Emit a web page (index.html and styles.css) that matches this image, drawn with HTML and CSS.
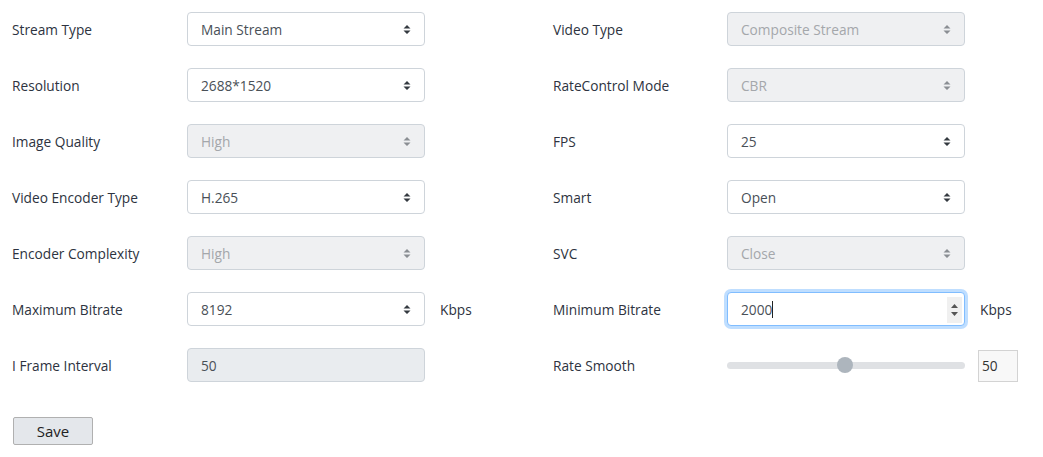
FILE: index.html
```html
<!DOCTYPE html>
<html>
<head>
<meta charset="utf-8">
<link rel="stylesheet" href="styles.css">
</head>
<body>
<div class="page">
  <div class="form">
    <div class="label">Stream Type</div>
    <div class="select"><span>Main Stream</span><svg class="arrow" width="8" height="11" viewBox="0 0 8 11"><path d="M4 1 L7.5 4.5 H0.5 Z M4 10 L7.5 6.5 H0.5 Z"/></svg></div>
    <div class="unit"></div>
    <div class="label">Video Type</div>
    <div class="select disabled"><span>Composite Stream</span><svg class="arrow" width="8" height="11" viewBox="0 0 8 11"><path d="M4 1 L7.5 4.5 H0.5 Z M4 10 L7.5 6.5 H0.5 Z"/></svg></div>
    <div class="unit"></div>

    <div class="label">Resolution</div>
    <div class="select"><span>2688*1520</span><svg class="arrow" width="8" height="11" viewBox="0 0 8 11"><path d="M4 1 L7.5 4.5 H0.5 Z M4 10 L7.5 6.5 H0.5 Z"/></svg></div>
    <div class="unit"></div>
    <div class="label">RateControl Mode</div>
    <div class="select disabled"><span>CBR</span><svg class="arrow" width="8" height="11" viewBox="0 0 8 11"><path d="M4 1 L7.5 4.5 H0.5 Z M4 10 L7.5 6.5 H0.5 Z"/></svg></div>
    <div class="unit"></div>

    <div class="label">Image Quality</div>
    <div class="select disabled"><span>High</span><svg class="arrow" width="8" height="11" viewBox="0 0 8 11"><path d="M4 1 L7.5 4.5 H0.5 Z M4 10 L7.5 6.5 H0.5 Z"/></svg></div>
    <div class="unit"></div>
    <div class="label">FPS</div>
    <div class="select"><span>25</span><svg class="arrow" width="8" height="11" viewBox="0 0 8 11"><path d="M4 1 L7.5 4.5 H0.5 Z M4 10 L7.5 6.5 H0.5 Z"/></svg></div>
    <div class="unit"></div>

    <div class="label">Video Encoder Type</div>
    <div class="select"><span>H.265</span><svg class="arrow" width="8" height="11" viewBox="0 0 8 11"><path d="M4 1 L7.5 4.5 H0.5 Z M4 10 L7.5 6.5 H0.5 Z"/></svg></div>
    <div class="unit"></div>
    <div class="label">Smart</div>
    <div class="select"><span>Open</span><svg class="arrow" width="8" height="11" viewBox="0 0 8 11"><path d="M4 1 L7.5 4.5 H0.5 Z M4 10 L7.5 6.5 H0.5 Z"/></svg></div>
    <div class="unit"></div>

    <div class="label">Encoder Complexity</div>
    <div class="select disabled"><span>High</span><svg class="arrow" width="8" height="11" viewBox="0 0 8 11"><path d="M4 1 L7.5 4.5 H0.5 Z M4 10 L7.5 6.5 H0.5 Z"/></svg></div>
    <div class="unit"></div>
    <div class="label">SVC</div>
    <div class="select disabled"><span>Close</span><svg class="arrow" width="8" height="11" viewBox="0 0 8 11"><path d="M4 1 L7.5 4.5 H0.5 Z M4 10 L7.5 6.5 H0.5 Z"/></svg></div>
    <div class="unit"></div>

    <div class="label">Maximum Bitrate</div>
    <div class="select"><span>8192</span><svg class="arrow" width="8" height="11" viewBox="0 0 8 11"><path d="M4 1 L7.5 4.5 H0.5 Z M4 10 L7.5 6.5 H0.5 Z"/></svg></div>
    <div class="unit">Kbps</div>
    <div class="label">Minimum Bitrate</div>
    <div class="input focused"><span class="value">2000</span><span class="caret"></span><span class="fill"></span><span class="spin"><svg width="9" height="22" viewBox="0 0 9 22"><path d="M4.5 5 L8 9 H1 Z M4.5 17 L8 13 H1 Z"/></svg></span></div>
    <div class="unit">Kbps</div>

    <div class="label">I Frame Interval</div>
    <div class="input disabled-input"><span class="value">50</span></div>
    <div class="unit"></div>
    <div class="label">Rate Smooth</div>
    <div class="slider"><div class="track"><div class="thumb"></div></div></div>
    <div class="unit"><div class="valbox">50</div></div>
  </div>
  <button class="save">Save</button>
</div>
</body>
</html>
```
FILE: styles.css
```css
* { box-sizing: border-box; }
body {
  margin: 0;
  background: #ffffff;
  font-family: "Open Sans", "Noto Sans", sans-serif;
  font-size: 13.7px;
  color: #333333;
}
.page {
  padding: 12px 0 0 12px;
}
.form {
  display: grid;
  grid-template-columns: 175px 238px 128px 174px 238px 80px;
  grid-auto-rows: 34px;
  row-gap: 22px;
}
.label {
  display: flex;
  align-items: center;
  color: #2d3340;
}
.select, .input {
  display: flex;
  align-items: center;
  border: 1px solid #ced4da;
  border-radius: 4px;
  background: #ffffff;
  color: #495057;
  padding: 1px 12px 0 13px;
  font-size: 13.7px;
}
.select span, .input .value {
  flex: 1 1 auto;
}
.select .arrow {
  fill: #343a40;
  flex: none;
  margin-right: 1px;
  margin-top: -1px;
}
.select.disabled {
  background: #eff0f2;
  color: #a4a7ab;
}
.select.disabled .arrow {
  fill: #8a8e93;
}
.disabled-input {
  background: #e9ecef;
}
.input.focused {
  border-color: #80bdff;
  box-shadow: 0 0 0 3px rgba(0, 123, 255, 0.25);
  padding-right: 1px;
}
.input.focused .value {
  flex: none;
  color: #495057;
}
.caret {
  width: 1px;
  height: 17px;
  background: #222;
  flex: none;
}
.fill { flex: 1 1 auto; }
.spin {
  display: flex;
  align-items: center;
  justify-content: center;
  width: 15px;
  height: 26px;
  background: #f0f0f0;
  fill: #555;
  margin-right: 1px;
}
.unit {
  display: flex;
  align-items: center;
  padding-left: 15px;
  color: #2d3340;
}
.slider {
  display: flex;
  align-items: center;
}
.track {
  position: relative;
  width: 100%;
  height: 7px;
  border-radius: 4px;
  background: #dfe1e4;
}
.thumb {
  position: absolute;
  left: 110px;
  top: -4.5px;
  width: 16px;
  height: 16px;
  border-radius: 50%;
  background: #adb5bd;
}
.unit .valbox {
  margin-left: -2px;
  width: 40px;
  height: 32px;
  border: 1px solid #d3d3d3;
  background: #f8f8f8;
  display: flex;
  align-items: center;
  padding-left: 3px;
  color: #333;
  margin-top: 1px;
}
.save {
  margin: 35px 0 0 1px;
  width: 80px;
  height: 28px;
  border: 1px solid #b0b0b0;
  border-radius: 2px;
  background: #e4e7eb;
  font-family: "Open Sans", "Noto Sans", sans-serif;
  font-size: 15px;
  color: #222;
  padding: 0;
}
```
